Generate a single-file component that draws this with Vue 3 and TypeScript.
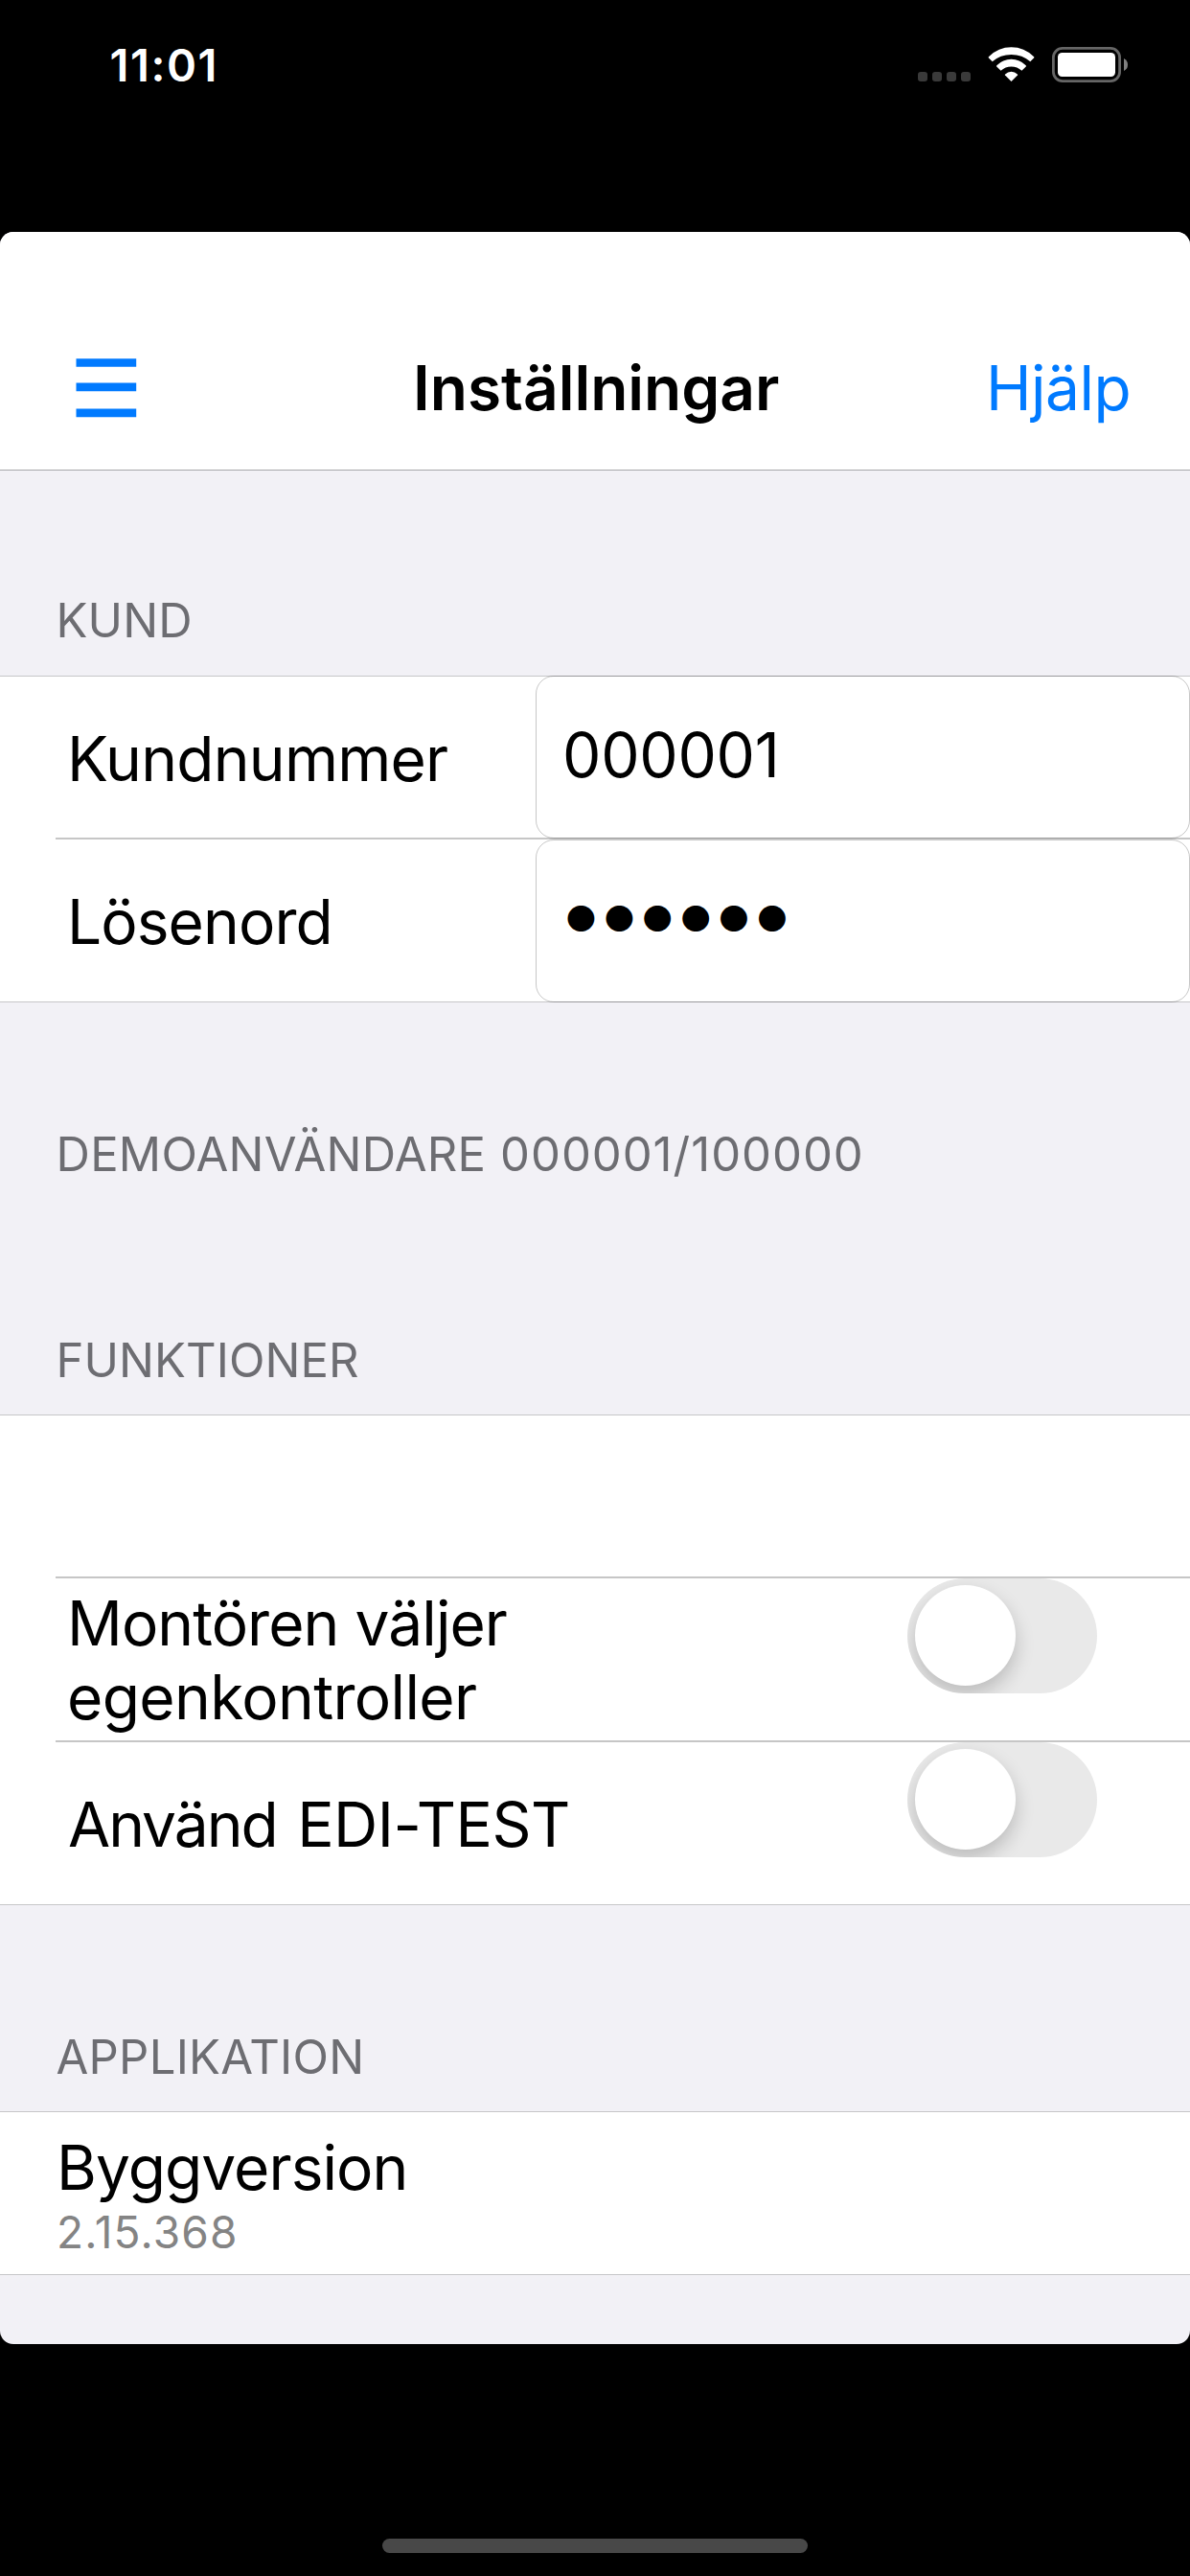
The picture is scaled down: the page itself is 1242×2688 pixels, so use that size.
<script setup lang="ts">
import { ref } from 'vue'

const montor = ref(false)
const edi = ref(false)
</script>

<template>
  <div class="phone">
    <header class="status">
      <span class="time">11:01</span>
      <svg class="indicators" width="222" height="40" viewBox="956 47 222 40" aria-hidden="true">
        <g fill="#3a3a3a">
          <rect x="958" y="75" width="10" height="10" rx="3" />
          <rect x="973" y="75" width="10" height="10" rx="3" />
          <rect x="988" y="75" width="10" height="10" rx="3" />
          <rect x="1003" y="75" width="10" height="10" rx="3" />
        </g>
        <g fill="#fff">
          <path d="M1055.5 57Q1067 57 1075.300 64.300L1079.300 60.300Q1079.600 59.700 1079.100 59.200Q1069 49.300 1055.500 49.300Q1042 49.300 1031.900 59.200Q1031.400 59.700 1031.700 60.300L1035.700 64.300Q1044 57 1055.500 57Z" />
          <path d="M1055.500 69.400Q1061.800 69.400 1066.400 73.800L1070.800 69.600Q1071.300 69 1070.700 68.300Q1064.300 61.800 1055.500 61.800Q1046.700 61.800 1040.300 68.300Q1039.700 69 1040.200 69.600L1044.600 73.800Q1049.200 69.400 1055.500 69.400Z" />
          <path d="M1055.500 85L1062 78.600Q1062.500 78 1061.900 77.400Q1059.200 74.700 1055.500 74.700Q1051.800 74.700 1049.100 77.400Q1048.500 78 1049 78.600Z" />
          <rect x="1104" y="55" width="60" height="25" rx="4.500" />
        </g>
        <rect x="1099.400" y="50.400" width="69.200" height="34.200" rx="9.500" fill="none" stroke="#666" stroke-width="2.800" />
        <path d="M1173 61Q1177 63 1177 67.500Q1177 72 1173 74Z" fill="#808080" />
      </svg>
    </header>

    <main class="sheet">
      <nav class="nav">
        <button class="menu" type="button" aria-label="Meny">
          <svg width="64" height="62" viewBox="0 0 64 62">
            <path d="M.5 4.500H63.200M.5 29.900H63.200M.5 56.900H63.200" stroke="#007aff" stroke-width="8.600" />
          </svg>
        </button>
        <h1 class="title">Inställningar</h1>
        <a class="help">Hjälp</a>
      </nav>

      <h2 class="heading kund">KUND</h2>
      <section class="group">
        <div class="row first">
          <span class="label w-k">Kundnummer</span>
          <div class="field">000001</div>
        </div>
        <div class="row last">
          <span class="label w-l">Lösenord</span>
          <div class="field secret">●●●●●●</div>
        </div>
      </section>
      <div class="note">DEMOANVÄNDARE<span class="digits"> 000001/100000</span></div>

      <h2 class="heading funk">FUNKTIONER</h2>
      <section class="group">
        <div class="row first"></div>
        <div class="row">
          <span class="label two">Montören väljer<br><span class="second">egenkontroller</span></span>
          <div class="toggle" :class="{ on: montor }" @click="montor = !montor"><i class="knob"></i></div>
        </div>
        <div class="row last">
          <span class="label edi"><span class="verb">Använd</span> EDI-TEST</span>
          <div class="toggle" :class="{ on: edi }" @click="edi = !edi"><i class="knob"></i></div>
        </div>
      </section>

      <h2 class="heading appl">APPLIKATION</h2>
      <section class="group">
        <div class="row last info">
          <span class="name">Byggversion</span>
          <span class="version">2.15.368</span>
        </div>
      </section>
    </main>

    <footer class="home"><i class="bar"></i></footer>
  </div>
</template>

<style>
html,
body {
  margin: 0;
  background: #000;
}
</style>

<style scoped>
* {
  box-sizing: border-box;
}
.phone {
  display: flex;
  flex-direction: column;
  width: 1242px;
  height: 2688px;
  overflow: hidden;
  background: #000;
  color: #000;
  font-family: Inter, "Liberation Sans", sans-serif;
  font-size: 64px;
  line-height: 77px;
}
.status {
  display: flex;
  flex: none;
  justify-content: space-between;
  height: 242px;
  padding: 39px 64px 0 114.500px;
}
.time {
  color: #fff;
  font-size: 47px;
  font-weight: 600;
  line-height: 57px;
  letter-spacing: 1.570px;
}
.indicators {
  margin-top: 8px;
}
.sheet {
  flex: none;
  height: 2204px;
  overflow: hidden;
  border-radius: 14px;
  background: #f2f1f6;
}
.nav {
  display: flex;
  height: 249px;
  padding: 124px 0 0 79px;
  background: #fff;
  border-bottom: 1px solid #a7a7aa;
}
.menu {
  width: 64px;
  height: 62px;
  margin: 8px 0 0;
  padding: 0;
  border: 0;
  background: none;
}
.menu svg {
  display: block;
}
.title {
  width: 598px;
  margin: 0 0 0 288px;
  font-size: 64px;
  font-weight: 600;
  white-space: nowrap;
}
.help {
  color: #007aff;
  letter-spacing: -0.500px;
}
.heading,
.note {
  margin: 0;
  padding-left: 58.500px;
  color: #6d6d72;
  font-size: 49px;
  font-weight: 400;
  line-height: 59px;
  white-space: nowrap;
}
.kund {
  padding-top: 127px;
  padding-bottom: 28px;
  letter-spacing: 0.170px;
}
.note {
  height: 215px;
  padding-top: 129px;
  letter-spacing: 0.270px;
}
.digits {
  letter-spacing: 1px;
}
.funk {
  padding-top: 129px;
  padding-bottom: 27px;
  letter-spacing: 0.080px;
}
.appl {
  padding-top: 129px;
  padding-bottom: 27px;
  letter-spacing: 0.260px;
}
.group {
  padding-left: 58px;
  background: #fff;
  border-top: 1px solid #c6c6c8;
  border-bottom: 1px solid #c6c6c8;
}
.row {
  display: flex;
  height: 171px;
  border-bottom: 2px solid #c6c6c6;
}
.row.first {
  height: 170px;
}
.row.last {
  height: 169px;
  border-bottom: 0;
}
.label {
  width: 501px;
  padding: 47px 0 0 12px;
  white-space: nowrap;
}
.w-k {
  letter-spacing: -0.740px;
}
.w-l {
  letter-spacing: -0.910px;
}
.field {
  width: 683px;
  margin: -1px 0;
  padding: 43px 0 0 27px;
  border: 1px solid rgba(0, 0, 0, 0.22);
  border-radius: 19px;
  letter-spacing: -0.250px;
}
.last .field {
  margin-top: 0;
}
.field.secret {
  padding: 59px 0 0 29.500px;
  font-size: 37px;
  line-height: 45px;
  letter-spacing: 6.080px;
}
.two {
  width: 889px;
  padding-top: 8px;
  letter-spacing: -0.920px;
}
.second {
  letter-spacing: -0.630px;
}
.edi {
  width: 889px;
  padding-left: 13px;
  letter-spacing: -0.500px;
  word-spacing: 4px;
}
.verb {
  letter-spacing: -2px;
}
.toggle {
  width: 198px;
  height: 120px;
  padding: 7px 8px;
  overflow: hidden;
  border-radius: 60px;
  background: #e9e9e9;
}
.toggle.on {
  background: #34c759;
}
.knob {
  display: block;
  width: 105px;
  height: 105px;
  border-radius: 50%;
  background: #fff;
  box-shadow: 0 9px 20px rgba(0, 0, 0, 0.2);
}
.toggle.on .knob {
  margin-left: auto;
}
.info {
  flex-direction: column;
  padding: 19px 0 0 1px;
}
.name {
  letter-spacing: -0.940px;
}
.version {
  margin-top: 1px;
  color: #848484;
  font-size: 46px;
  line-height: 56px;
  letter-spacing: 1.180px;
}
.home {
  display: flex;
  flex: 1;
  align-items: flex-end;
  padding: 0 0 24px 399px;
}
.bar {
  width: 444px;
  height: 15px;
  border-radius: 8px;
  background: #484848;
}
</style>
